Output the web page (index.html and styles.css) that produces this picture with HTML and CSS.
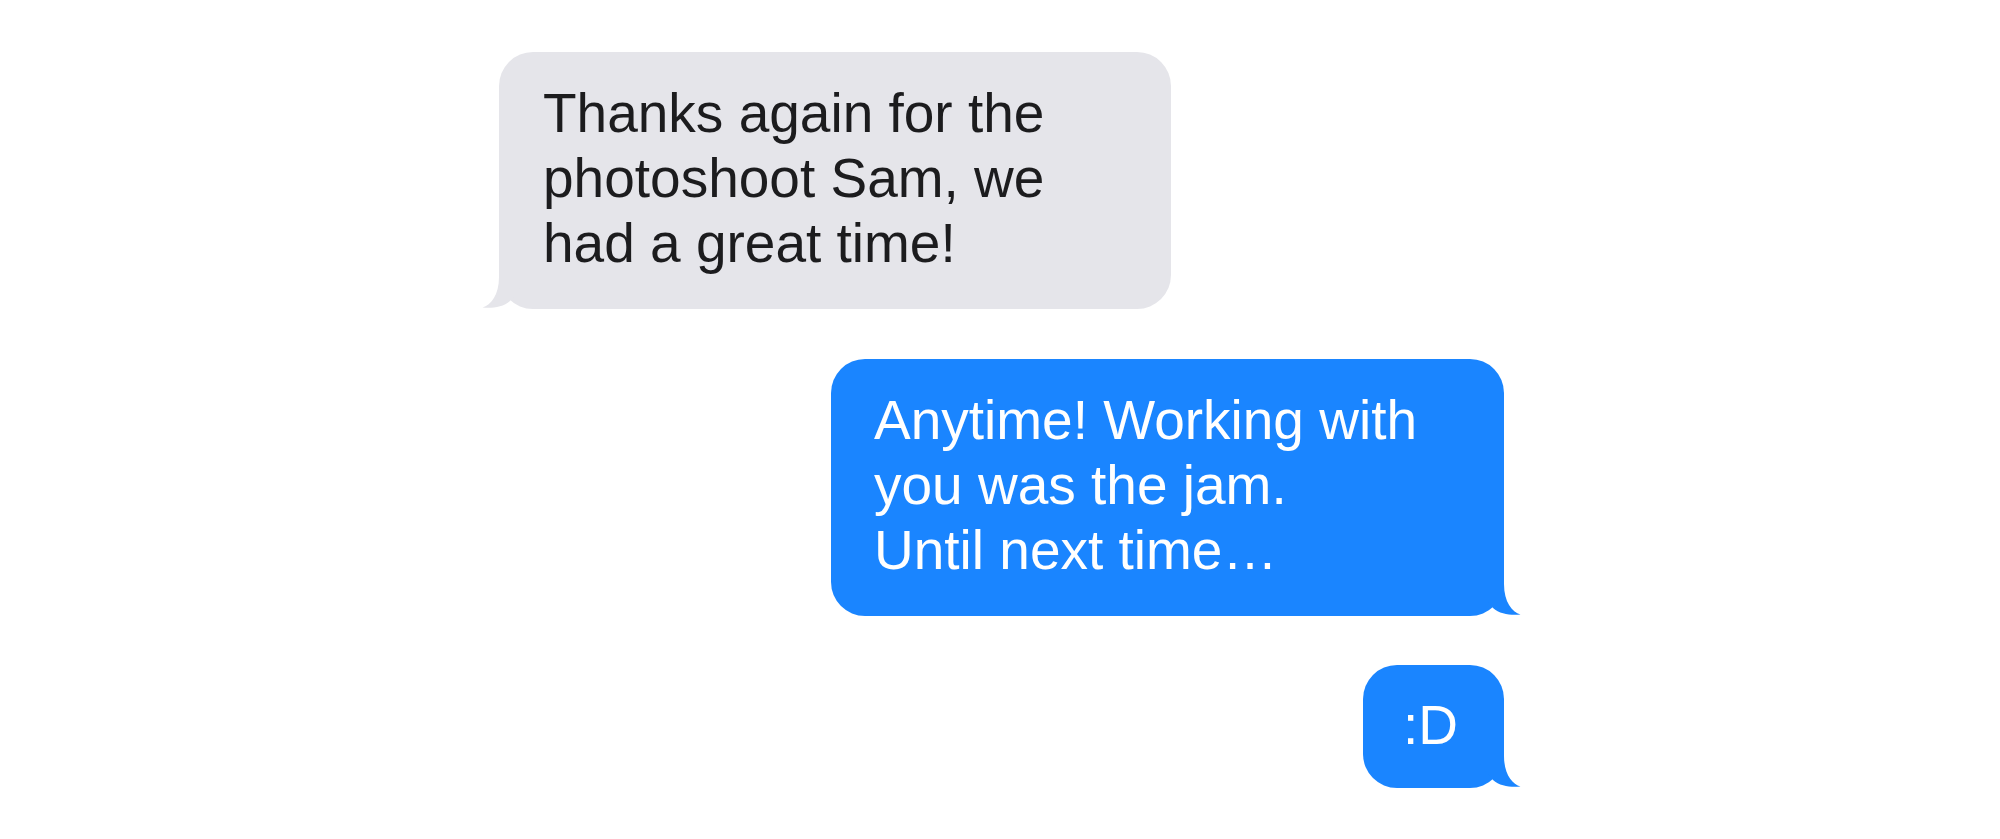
FILE: index.html
```html
<!DOCTYPE html>
<html lang="en">
<head>
<meta charset="utf-8">
<title>Messages</title>
<link rel="stylesheet" href="styles.css">
</head>
<body>
<main class="chat">
  <div class="bubble received">
    <p class="text">Thanks again for the<br>photoshoot Sam, we<br>had a great time!</p>
    <svg class="tail tail-left" width="44" height="48" viewBox="-17 -48 44 48" aria-hidden="true">
      <path d="M 0 -48 L 0 -32 C 0 -14 -8 -4 -16.5 -1.5 C -8 -0.5 4 -1.5 11 -8 L 24 -24 L 24 -48 Z"/>
    </svg>
  </div>
  <div class="bubble sent wide">
    <p class="text">Anytime! Working with<br>you was the jam.<br>Until next time…</p>
    <svg class="tail tail-right" width="44" height="48" viewBox="-27 -48 44 48" aria-hidden="true">
      <path d="M 0 -48 L 0 -32 C 0 -14 8 -4 16.5 -1.5 C 8 -0.5 -4 -1.5 -11 -8 L -24 -24 L -24 -48 Z"/>
    </svg>
  </div>
  <div class="bubble sent small">
    <p class="text">:D</p>
    <svg class="tail tail-right" width="44" height="48" viewBox="-27 -48 44 48" aria-hidden="true">
      <path d="M 0 -48 L 0 -32 C 0 -14 8 -4 16.5 -1.5 C 8 -0.5 -4 -1.5 -11 -8 L -24 -24 L -24 -48 Z"/>
    </svg>
  </div>
</main>
</body>
</html>
```
FILE: styles.css
```css
html, body {
  margin: 0;
  padding: 0;
  background: #ffffff;
}

body {
  font-family: "Liberation Sans", Arial, sans-serif;
}

.chat {
  width: 1005px;
  padding: 52px 0 0 499px;
  display: flex;
  flex-direction: column;
  gap: 50px;
}

.bubble {
  position: relative;
  border-radius: 34px;
  box-sizing: border-box;
}

.text {
  margin: 0;
  font-size: 55px;
  line-height: 65px;
  white-space: nowrap;
}

.received {
  align-self: flex-start;
  width: 672px;
  background: #e5e5ea;
  color: #1c1c1e;
  padding: 29px 44px 33px 44px;
}

.received .tail {
  fill: #e5e5ea;
}

.sent {
  align-self: flex-end;
  background: #1a85ff;
  color: #ffffff;
}

.sent .tail {
  fill: #1a85ff;
}

.wide {
  width: 673px;
  padding: 29px 43px 33px 43px;
}

.small {
  padding: 28px 46px 30px 40px;
  margin-top: -1px;
}

.tail {
  position: absolute;
  bottom: 0;
  display: block;
}

.tail-left {
  left: -17px;
}

.tail-right {
  right: -17px;
}
```
